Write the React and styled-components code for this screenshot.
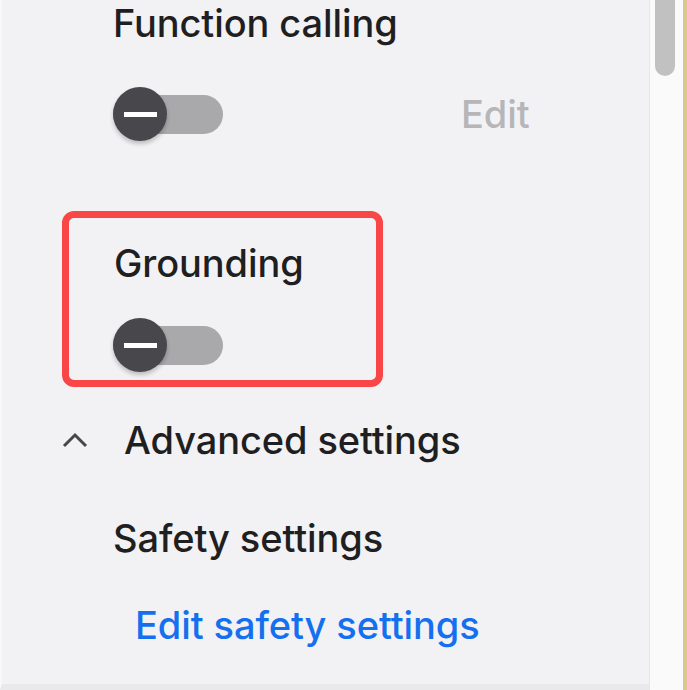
import styled, { createGlobalStyle } from "styled-components";

const GlobalStyle = createGlobalStyle`
  html, body {
    margin: 0;
    padding: 0;
    background: #f2f2f5;
  }
  body {
    font-family: Inter, Roboto, "Noto Sans", sans-serif;
    -webkit-font-smoothing: antialiased;
  }
`;

const Page = styled.div`
  width: 687px;
  height: 690px;
  display: flex;
  overflow: hidden;
`;

const Panel = styled.div`
  flex: 1;
  display: flex;
  flex-direction: column;
  padding: 3px 0 0 60px;
  background: #f2f2f5;
  border-left: 2px solid #f8f8f9;
  border-bottom: 6px solid #e9e9eb;
  box-sizing: border-box;
`;

const ScrollTrack = styled.div`
  width: 38px;
  box-sizing: border-box;
  display: flex;
  justify-content: center;
  background: #fafafa;
  border-left: 1px solid #e6e6e8;
  border-right: 4px solid #dcc88e;
  padding-right: 4px;
`;

const Thumb = styled.div`
  width: 20px;
  height: 76px;
  background: #c1c1c1;
  border-radius: 0 0 10px 10px;
`;

const Title = styled.div`
  font-size: 38px;
  line-height: 40px;
  font-weight: 500;
  color: #1f1f21;
  letter-spacing: -0.1px;
  padding-left: ${(p) => p.$indent || 0}px;
  margin-top: ${(p) => p.$top || 0}px;
`;

const ToggleRow = styled.div`
  display: flex;
  align-items: center;
  height: 56px;
  padding-left: ${(p) => p.$indent || 0}px;
  margin-top: ${(p) => p.$top || 0}px;
`;

const Track = styled.div`
  position: relative;
  width: 110px;
  height: 39px;
  border-radius: 20px;
  background: #a9a9ac;
  display: flex;
  align-items: center;
  margin-left: -1px;
`;

const Knob = styled.div`
  position: absolute;
  left: 0;
  top: 50%;
  width: 54px;
  height: 54px;
  margin-top: -27px;
  border-radius: 50%;
  background: #48484c;
  box-shadow: 0 3px 4px rgba(0, 0, 0, 0.22);
  display: flex;
  align-items: center;
  justify-content: center;

  &::after {
    content: "";
    width: 33px;
    height: 5px;
    background: #ffffff;
  }
`;

const EditLink = styled.span`
  margin-left: 238px;
  font-size: 38px;
  line-height: 40px;
  font-weight: 500;
  letter-spacing: -0.1px;
  color: #b6b6b9;
`;

const Highlight = styled.div`
  width: 321px;
  height: 176px;
  box-sizing: border-box;
  border: 7px solid #f94646;
  border-radius: 12px;
  margin-top: 69px;
  padding: 25px 0 0 45px;
  display: flex;
  flex-direction: column;
`;

const Section = styled.div`
  display: flex;
  align-items: center;
  margin-top: 33px;
  height: 40px;
`;

const Chevron = styled.svg`
  width: 28px;
  height: 18px;
  margin-right: 34px;
  flex-shrink: 0;
`;

const Link = styled.div`
  font-size: 38px;
  line-height: 40px;
  font-weight: 500;
  letter-spacing: -0.1px;
  color: #1570ef;
  padding-left: 73px;
  margin-top: 47px;
`;

function Toggle() {
  return (
    <Track>
      <Knob />
    </Track>
  );
}

export default function App() {
  return (
    <>
      <GlobalStyle />
      <Page>
        <Panel>
          <Title $indent={51}>Function calling</Title>
          <ToggleRow $indent={52} $top={43}>
            <Toggle />
            <EditLink>Edit</EditLink>
          </ToggleRow>

          <Highlight>
            <Title>Grounding</Title>
            <ToggleRow $top={34}>
              <Toggle />
            </ToggleRow>
          </Highlight>

          <Section>
            <Chevron viewBox="0 0 28 18">
              <polyline
                points="2,15 13,4 24,15"
                fill="none"
                stroke="#47474a"
                strokeWidth="3"
              />
            </Chevron>
            <Title>Advanced settings</Title>
          </Section>

          <Title $indent={51} $top={58}>Safety settings</Title>
          <Link>Edit safety settings</Link>
        </Panel>
        <ScrollTrack>
          <Thumb />
        </ScrollTrack>
      </Page>
    </>
  );
}
